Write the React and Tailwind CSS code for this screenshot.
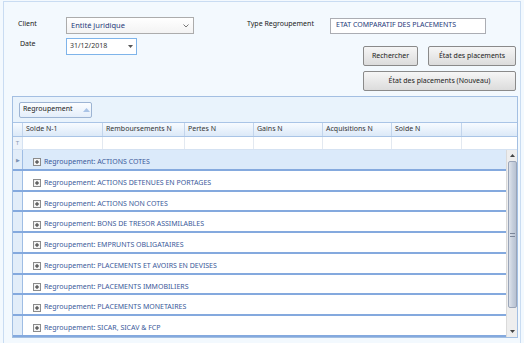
import React from 'react';

const groups = [
  'ACTIONS COTES',
  'ACTIONS DETENUES EN PORTAGES',
  'ACTIONS NON COTES',
  'BONS DE TRESOR ASSIMILABLES',
  'EMPRUNTS OBLIGATAIRES',
  'PLACEMENTS ET AVOIRS EN DEVISES',
  'PLACEMENTS IMMOBILIERS',
  'PLACEMENTS MONETAIRES',
  'SICAR, SICAV & FCP',
];

const columns = [
  { name: 'Solde N-1', w: 'w-[80px]' },
  { name: 'Remboursements N', w: 'w-[82px]' },
  { name: 'Pertes N', w: 'w-[69px]' },
  { name: 'Gains N', w: 'w-[69px]' },
  { name: 'Acquisitions N', w: 'w-[69px]' },
  { name: 'Solde N', w: 'w-[70px]' },
];

const Expander = () => (
  <svg width="8" height="8" viewBox="0 0 8 8" className="shrink-0">
    <rect x="0.5" y="0.5" width="7" height="7" fill="#f4f4f4" stroke="#8b8b8b" />
    <path d="M2 4h4M4 2v4" stroke="#333" strokeWidth="1" />
  </svg>
);

const Button = ({ children, className = '' }) => (
  <div
    className={`h-[20px] flex items-center justify-center rounded-[2px] border border-[#8a8a8a] bg-gradient-to-b from-[#f6f6f6] to-[#dcdcdc] text-[#1a1a1a] ${className}`}
  >
    {children}
  </div>
);

export default function App() {
  return (
    <div className="w-[524px] h-[343px] overflow-hidden bg-[#f3f9fe] font-['Noto_Sans',sans-serif] text-[7px] text-[#1a1a1a]">
      <div className="ml-[3px] mt-[1px] mr-[3px] h-[360px] border-l border-t border-r border-[#c9dcf2] pt-[14px]">
        {/* top form */}
        <div className="flex h-[80px]">
          <div className="w-[243px] flex flex-col">
            <div className="flex items-center h-[17px] mt-[1px]">
              <span className="w-[62px] pl-[14px] -mt-[3px]">Client</span>
              <div className="w-[128px] h-[17px] border border-[#acacac] bg-gradient-to-b from-white to-[#f3f3f3] flex items-center px-[4px] text-[7.5px] text-[#1f3a7a]">
                <span className="flex-1">Entité juridique</span>
                <svg width="6" height="4" viewBox="0 0 6 4">
                  <path d="M0.5 0.5L3 3L5.5 0.5" fill="none" stroke="#777" strokeWidth="1" />
                </svg>
              </div>
            </div>
            <div className="flex items-center h-[17px] mt-[4px]">
              <span className="w-[62px] pl-[16px] -mt-[5px]">Date</span>
              <div className="w-[71px] h-[17px] border border-[#7eb4ea] bg-white flex items-center px-[3px] text-[#333]">
                <span className="flex-1">31/12/2018</span>
                <svg width="5" height="3" viewBox="0 0 5 3">
                  <path d="M0 0H5L2.5 3Z" fill="#555" />
                </svg>
              </div>
            </div>
          </div>
          <div className="flex-1 flex flex-col pr-[4px]">
            <div className="flex items-center h-[17px] mt-[1px]">
              <span className="w-[83px] -mt-[3px]">Type Regroupement</span>
              <div className="w-[156px] h-[16px] border border-[#abadb3] bg-white flex items-center px-[5px] text-[#1f3a7a]">
                ETAT COMPARATIF DES PLACEMENTS
              </div>
            </div>
            <div className="flex justify-end gap-[10px] mt-[12px]">
              <Button className="w-[55px]">Rechercher</Button>
              <Button className="w-[88px]">État des placements</Button>
            </div>
            <div className="flex justify-end mt-[5px]">
              <Button className="w-[153px]">État des placements (Nouveau)</Button>
            </div>
          </div>
        </div>

        {/* grid */}
        <div className="ml-[8px] w-[506px] h-[242px] border border-[#a3bfe2] bg-white flex flex-col">
          <div className="h-[25px] bg-[#e9f3fc] flex items-center pl-[6px] shrink-0">
            <div className="w-[73px] h-[16px] border border-[#9db4d3] rounded-[2px] bg-gradient-to-b from-[#fbfdff] to-[#e4eefa] flex items-center pl-[3px] gap-[10px] text-[#222]">
              <span>Regroupement</span>
              <svg width="7" height="4" viewBox="0 0 7 4">
                <path d="M0 4L3.5 0L7 4Z" fill="#a9c3e6" />
              </svg>
            </div>
          </div>
          <div className="h-[15px] flex shrink-0 border-t border-b border-[#a9c4e6] bg-gradient-to-b from-[#f7fbff] to-[#dce9f8]">
            <div className="w-[10px] border-r border-[#c3d5ec]" />
            {columns.map((c) => (
              <div key={c.name} className={`${c.w} border-r border-[#c3d5ec] pl-[3px] flex items-center text-[#333]`}>
                {c.name}
              </div>
            ))}
            <div className="flex-1" />
          </div>
          <div className="h-[13px] flex shrink-0 border-b border-[#d5e2f2]">
            <div className="w-[10px] border-r border-[#d5e2f2] bg-[#eef4fb] flex items-center justify-center text-[6px] text-[#8a9bb3]">
              T
            </div>
            {columns.map((c) => (
              <div key={c.name} className={`${c.w} border-r border-[#e3e9f1]`} />
            ))}
            <div className="flex-1" />
          </div>
          <div className="flex flex-1 min-h-0">
            <div className="flex-1 flex flex-col">
              {groups.map((g, i) => (
                <div
                  key={g}
                  className={`h-[20.75px] shrink-0 flex border-b-2 border-[#84a9de] ${i === 0 ? 'bg-[#dbeafa]' : 'bg-white'}`}
                >
                  <div className="w-[10px] bg-[#e2edf9] border-r border-[#9fbde4] flex items-center justify-center pt-[3px] text-[5px] text-[#7d93b3]">
                    {i === 0 ? '▶' : ''}
                  </div>
                  <div className="flex items-center gap-[3px] pl-[10px] pt-[6px] text-[#3b5a9a]">
                    <Expander />
                    <span>Regroupement: {g}</span>
                  </div>
                </div>
              ))}
            </div>
            <div className="w-[11px] bg-[#eeeeee] border-l border-[#dadada] flex flex-col items-center">
              <div className="h-[11px] flex items-center justify-center">
                <svg width="5" height="3" viewBox="0 0 5 3">
                  <path d="M0 3L2.5 0L5 3Z" fill="#444" />
                </svg>
              </div>
              <div className="w-[9px] h-[147px] rounded-[2px] border border-[#9aa5b8] bg-gradient-to-r from-[#dfe4ec] via-[#c7d0dd] to-[#b8c2d2] flex items-center justify-center">
                <div className="w-[5px] h-[4px] border-t border-b border-[#7b8699]" />
              </div>
              <div className="flex-1" />
              <div className="h-[11px] flex items-center justify-center">
                <svg width="5" height="3" viewBox="0 0 5 3">
                  <path d="M0 0H5L2.5 3Z" fill="#444" />
                </svg>
              </div>
            </div>
          </div>
        </div>
      </div>
    </div>
  );
}
